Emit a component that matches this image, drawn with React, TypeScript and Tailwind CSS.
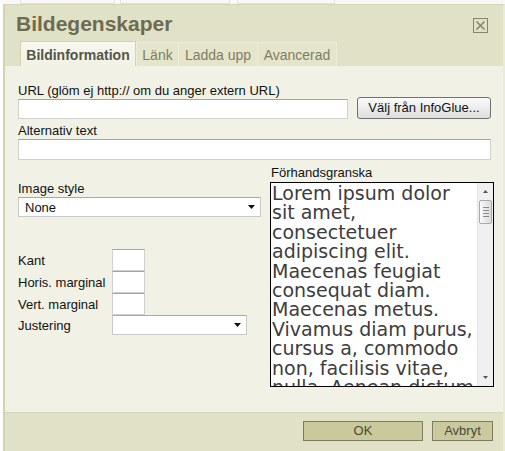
import React from "react";

const previewLines = [
  "Lorem ipsum dolor",
  "sit amet,",
  "consectetuer",
  "adipiscing elit.",
  "Maecenas feugiat",
  "consequat diam.",
  "Maecenas metus.",
  "Vivamus diam purus,",
  "cursus a, commodo",
  "non, facilisis vitae,",
  "nulla. Aenean dictum",
];

const DownArrow = () => (
  <svg width="7" height="4" viewBox="0 0 7 4">
    <path d="M0 0h7L3.5 4z" fill="#111" />
  </svg>
);

const Select = ({ value, className }: { value?: string; className: string }) => (
  <div
    className={`flex items-center justify-between bg-white border border-[#c9c9c9] border-t-[#a9a9a9] pl-[6px] pr-[5px] ${className}`}
  >
    <span className="leading-[15px]">{value}</span>
    <DownArrow />
  </div>
);

const Field = ({ className }: { className: string }) => (
  <div className={`bg-white border border-[#d0d0d0] border-t-[#a4a4a4] ${className}`} />
);

const Scrollbar = () => (
  <div className="w-[16px] shrink-0 flex flex-col bg-[#f0f0f0] border-l border-[#e4e4e4]">
    <div className="h-[17px] flex items-center justify-center">
      <svg width="5" height="3" viewBox="0 0 5 3">
        <path d="M0 3h5L2.5 0z" fill="#555" />
      </svg>
    </div>
    <div className="h-[24px] mx-px rounded-[2px] border border-[#a8a8a8] bg-gradient-to-r from-[#fafafa] to-[#dcdcdc] flex flex-col items-center justify-center gap-[2px]">
      <div className="w-[6px] h-px bg-[#8a8a8a]" />
      <div className="w-[6px] h-px bg-[#8a8a8a]" />
      <div className="w-[6px] h-px bg-[#8a8a8a]" />
      <div className="w-[6px] h-px bg-[#8a8a8a]" />
    </div>
    <div className="flex-1" />
    <div className="h-[17px] flex items-center justify-center">
      <svg width="5" height="3" viewBox="0 0 5 3">
        <path d="M0 0h5L2.5 3z" fill="#555" />
      </svg>
    </div>
  </div>
);

export default function App() {
  return (
    <div className="w-[505px] h-[451px] overflow-hidden bg-white font-['Liberation_Sans',Arial,sans-serif] text-[13px] text-[#111]">
      <div className="h-[4px] flex bg-[#f8f8f8]">
        <div className="ml-[20px] w-[95px] border-x border-b border-[#e2e2e2]" />
        <div className="ml-[5px] w-[110px] border-x border-b border-[#e2e2e2]" />
        <div className="ml-[7px] w-[98px] border-x border-b border-[#e2e2e2]" />
      </div>
      <div className="ml-[3px] w-[502px] h-[447px] flex flex-col border-t border-l-2 border-r-2 border-t-[#d6d6b4] border-l-[#d3d3ad] border-r-[#ebebd8]">
        {/* header */}
        <div className="relative h-[61px] shrink-0 bg-[#e1e1c7]">
          <div className="pt-[7px] pl-[11px] text-[21px] leading-[24px] font-bold text-[#6c6c50]">
            Bildegenskaper
          </div>
          <button className="absolute top-[13px] right-[15px] w-[15px] h-[15px]">
            <svg width="15" height="15" viewBox="0 0 15 15">
              <rect x="0.5" y="0.5" width="14" height="14" fill="none" stroke="#85856c" />
              <path d="M3.5 3.5l8 8M11.5 3.5l-8 8" stroke="#85856c" strokeWidth="1.6" />
            </svg>
          </button>
          <div className="mt-[5px] pl-[15px] flex items-end h-[25px] text-[14px]">
            <div className="w-[116px] h-[25px] pt-[5px] leading-[16px] text-center font-bold text-[#55554a] bg-gradient-to-b from-[#f7f7ee] to-[#f1f1e5] border-t border-x border-[#d3d3b0]">
              Bildinformation
            </div>
            <div className="w-[43px] h-[24px] pt-[4px] leading-[16px] text-center text-[#7e7e64] bg-[#e5e5cc] border-t border-x border-[#ededda]">
              Länk
            </div>
            <div className="w-[79px] h-[24px] pt-[4px] leading-[16px] text-center text-[#7e7e64] bg-[#e5e5cc] border-t border-r border-[#ededda]">
              Ladda upp
            </div>
            <div className="w-[79px] h-[24px] pt-[4px] leading-[16px] text-center text-[#7e7e64] bg-[#e5e5cc] border-t border-r border-[#ededda]">
              Avancerad
            </div>
          </div>
        </div>

        {/* content */}
        <div className="h-[346px] shrink-0 bg-[#f1f1e5] pl-[13px] pr-[12px]">
          <div className="pt-[18px] leading-[14px]">URL (glöm ej http:// om du anger extern URL)</div>
          <div className="flex items-start">
            <Field className="mt-px w-[330px] h-[20px]" />
            <button className="ml-auto -mt-px w-[134px] h-[22px] rounded-[3px] border border-[#707070] bg-gradient-to-b from-[#fbfbfb] to-[#dedede] text-[13px] text-[#111]">
              Välj från InfoGlue...
            </button>
          </div>
          <div className="mt-[5px] leading-[14px]">Alternativ text</div>
          <Field className="mt-px w-full h-[21px]" />

          <div className="flex">
            <div className="w-[243px] shrink-0">
              <div className="mt-[22px] leading-[14px]">Image style</div>
              <Select value="None" className="mt-px w-[243px] h-[20px]" />
              <div className="mt-[32px] flex flex-col">
                <div className="flex items-center h-[22px]">
                  <span className="w-[94px] leading-[15px]">Kant</span>
                  <Field className="w-[33px] h-[22px]" />
                </div>
                <div className="flex items-center h-[22px]">
                  <span className="w-[94px] leading-[15px]">Horis. marginal</span>
                  <Field className="w-[33px] h-[22px]" />
                </div>
                <div className="flex items-center h-[22px]">
                  <span className="w-[94px] leading-[15px]">Vert. marginal</span>
                  <Field className="w-[33px] h-[22px]" />
                </div>
                <div className="flex items-center h-[20px]">
                  <span className="w-[94px] leading-[15px]">Justering</span>
                  <Select className="w-[135px] h-[20px]" />
                </div>
              </div>
            </div>
            <div className="ml-[9px] w-[224px] shrink-0">
              <div className="mt-[6px] pl-px leading-[14px]">Förhandsgranska</div>
              <div className="mt-[2px] h-[205px] flex border border-black bg-white">
                <div className="flex-1 overflow-hidden pt-px pl-px font-['DejaVu_Sans',Verdana,sans-serif] text-[19px] leading-[19.4px] text-[#3d3d3d]">
                  {previewLines.map((line) => (
                    <div key={line} className="whitespace-nowrap">
                      {line}
                    </div>
                  ))}
                </div>
                <Scrollbar />
              </div>
            </div>
          </div>
        </div>

        {/* footer */}
        <div className="flex-1 bg-[#e1e1c8] border-t border-[#d6d6b8] flex justify-end items-start pt-[8px] pr-[10px] gap-[9px]">
          <button className="w-[120px] h-[20px] bg-[#c9c99b] border border-[#7c7c60] text-[13px] leading-[16px] text-[#4a4a3a]">
            OK
          </button>
          <button className="w-[61px] h-[20px] bg-[#c9c99b] border border-[#7c7c60] text-[13px] leading-[16px] text-[#4a4a3a]">
            Avbryt
          </button>
        </div>
      </div>
    </div>
  );
}
